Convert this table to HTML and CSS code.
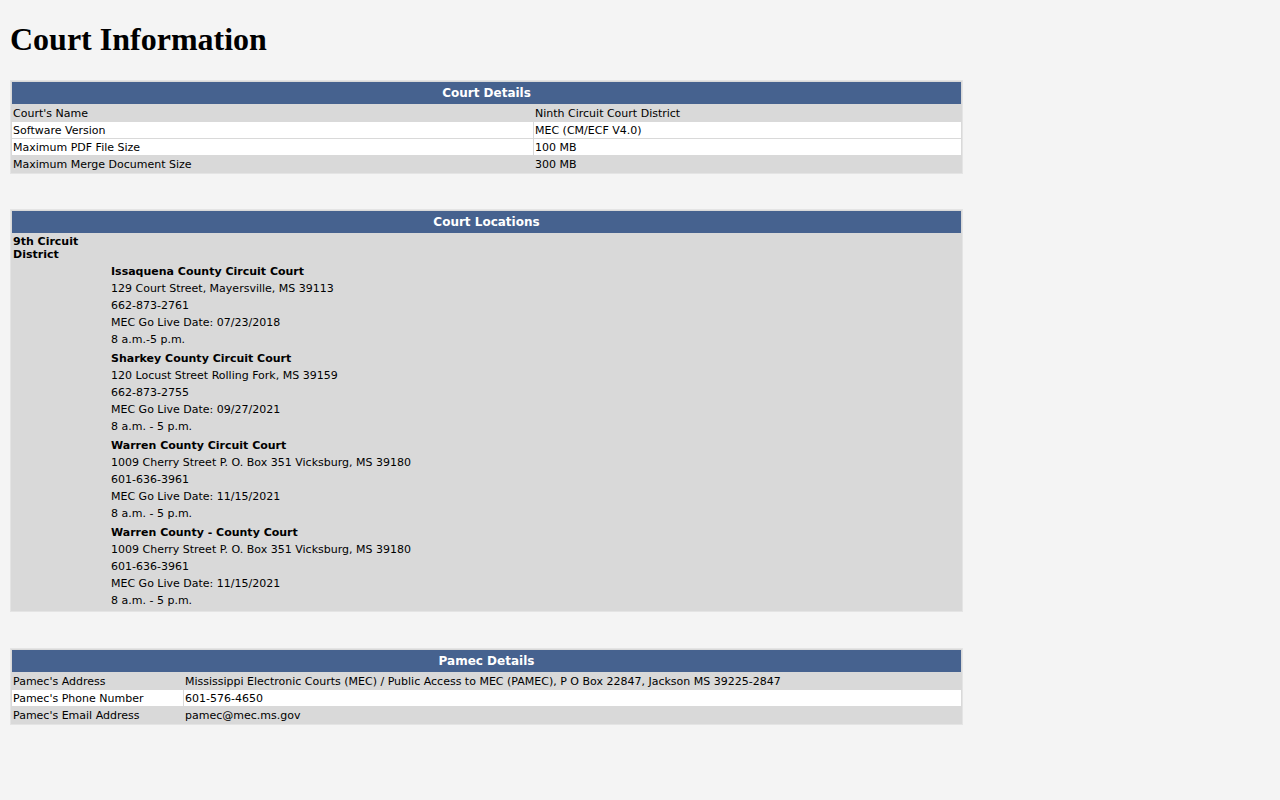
FILE: index.html
```html
<!DOCTYPE html>
<html>
<head>
<meta charset="utf-8">
<title>Court Information</title>
<link rel="stylesheet" href="styles.css">
</head>
<body>
<h1 class="title">Court Information</h1>

<table class="info">
  <colgroup><col class="c-details"><col></colgroup>
  <tr><th colspan="2" class="head">Court Details</th></tr>
  <tr class="g"><td>Court's Name</td><td>Ninth Circuit Court District</td></tr>
  <tr class="w"><td>Software Version</td><td>MEC (CM/ECF V4.0)</td></tr>
  <tr class="w"><td>Maximum PDF File Size</td><td>100 MB</td></tr>
  <tr class="g"><td>Maximum Merge Document Size</td><td>300 MB</td></tr>
</table>

<table class="info info-mid">
  <colgroup><col class="c-loc"><col></colgroup>
  <tr><th colspan="2" class="head">Court Locations</th></tr>
  <tr class="g"><td class="district">9th Circuit District</td><td></td></tr>
  <tr class="g"><td></td><td class="court">
    <div class="name">Issaquena County Circuit Court</div>
    <div>129 Court Street, Mayersville, MS 39113</div>
    <div>662-873-2761</div>
    <div>MEC Go Live Date: 07/23/2018</div>
    <div>8 a.m.-5 p.m.</div>
  </td></tr>
  <tr class="g"><td></td><td class="court">
    <div class="name">Sharkey County Circuit Court</div>
    <div>120 Locust Street Rolling Fork, MS 39159</div>
    <div>662-873-2755</div>
    <div>MEC Go Live Date: 09/27/2021</div>
    <div>8 a.m. - 5 p.m.</div>
  </td></tr>
  <tr class="g"><td></td><td class="court">
    <div class="name">Warren County Circuit Court</div>
    <div>1009 Cherry Street P. O. Box 351 Vicksburg, MS 39180</div>
    <div>601-636-3961</div>
    <div>MEC Go Live Date: 11/15/2021</div>
    <div>8 a.m. - 5 p.m.</div>
  </td></tr>
  <tr class="g"><td></td><td class="court">
    <div class="name">Warren County - County Court</div>
    <div>1009 Cherry Street P. O. Box 351 Vicksburg, MS 39180</div>
    <div>601-636-3961</div>
    <div>MEC Go Live Date: 11/15/2021</div>
    <div>8 a.m. - 5 p.m.</div>
  </td></tr>
</table>

<table class="info">
  <colgroup><col class="c-pamec"><col></colgroup>
  <tr><th colspan="2" class="head">Pamec Details</th></tr>
  <tr class="g"><td>Pamec's Address</td><td>Mississippi Electronic Courts (MEC) / Public Access to MEC (PAMEC), P O Box 22847, Jackson MS 39225-2847</td></tr>
  <tr class="w"><td>Pamec's Phone Number</td><td>601-576-4650</td></tr>
  <tr class="g"><td>Pamec's Email Address</td><td>pamec@mec.ms.gov</td></tr>
</table>
</body>
</html>
```

FILE: styles.css
```css
html, body {
  background: #f4f4f4;
}
body {
  margin: 0 10px 10px 10px;
  padding-top: 0;
  color: #000;
}
.title {
  font-family: "Liberation Serif", serif;
  font-size: 32px;
  font-weight: bold;
  margin: 0 0 22px 0;
  padding-top: 21px;
  line-height: 37px;
}
.info {
  width: 953px;
  table-layout: fixed;
  border-collapse: separate;
  border-spacing: 1px;
  border: 1px solid #e4e4e4;
  background: #d9d9d9;
  font-family: "DejaVu Sans", sans-serif;
  font-size: 11px;
  margin: 0 0 35px 0;
}
.info-mid { margin-bottom: 36px; }
.c-details { width: 521px; }
.c-loc { width: 97px; }
.c-pamec { width: 171px; }
.head {
  background: #46628f;
  color: #fff;
  font-weight: bold;
  font-size: 12px;
  text-align: center;
  height: 22px;
  padding: 0;
  line-height: 22px;
}
.info td {
  padding: 1px 2px 0 1px;
  height: 15px;
  line-height: 15px;
  vertical-align: top;
  white-space: nowrap;
}
.info tr.g td { background: #d9d9d9; }
.info tr.w td { background: #ffffff; }
.info td.district {
  font-weight: bold;
  white-space: normal;
  line-height: 13px;
  padding: 1px 1px 1px 1px;
}
.info td.court {
  padding: 0 0 1px 1px;
  line-height: 17px;
}
.court .name { font-weight: bold; }
```
